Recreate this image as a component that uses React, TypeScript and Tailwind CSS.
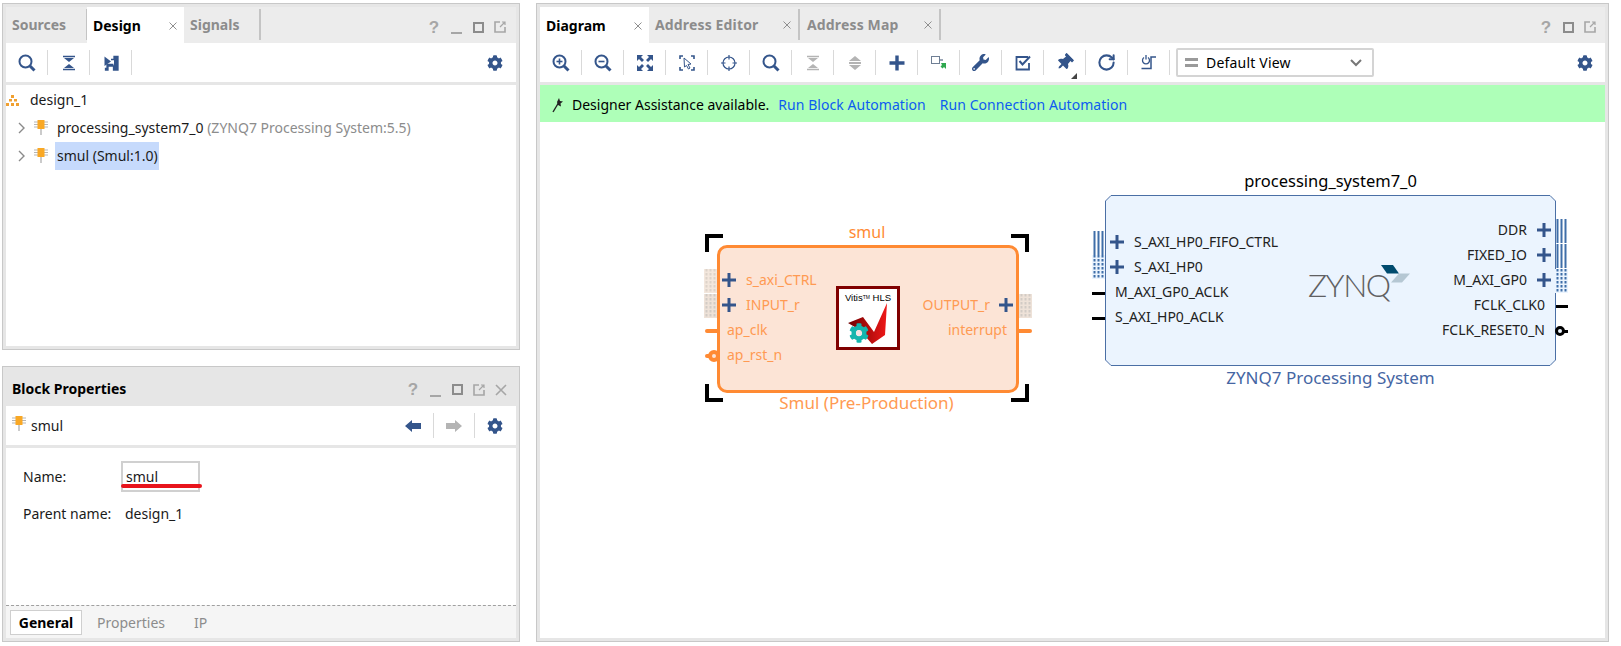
import { FaCog, FaWrench, FaThumbtack } from "react-icons/fa"
import { RotateCw } from "lucide-react"

const BLUE = "#34558b"
const GRAY = "#b4b4b4"

function Sep() {
    return <div className="w-px h-[25px] bg-[#d9d9d9] shrink-0" />
}

function Slot({ children }: { children: React.ReactNode }) {
    return <div className="w-[41px] shrink-0 flex items-center justify-center relative">{children}</div>
}

function Ic({ children }: { children: React.ReactNode }) {
    return <svg width="20" height="20" viewBox="0 0 20 20" fill="none">{children}</svg>
}

function Search({ inner }: { inner?: "plus" | "minus" }) {
    return (
        <Ic>
            <circle cx="8.5" cy="8.5" r="6" stroke={BLUE} strokeWidth="2" />
            <path d="M13 13l4.5 4.5" stroke={BLUE} strokeWidth="3" />
            {inner && <path d="M5.5 8.5h6" stroke={BLUE} strokeWidth="1.6" />}
            {inner === "plus" && <path d="M8.5 5.5v6" stroke={BLUE} strokeWidth="1.6" />}
        </Ic>
    )
}

function Collapse({ color }: { color: string }) {
    return (
        <Ic>
            <path d="M4 3.500h12M4 16.500h12" stroke={color} strokeWidth="1.6" />
            <path d="M5 5h10l-5 4zM5 15h10l-5-4z" fill={color} />
        </Ic>
    )
}

function Expand() {
    return (
        <Ic>
            <path d="M10 3l6 5H4zM10 17l6-5H4z" fill={GRAY} />
            <path d="M4 10h12" stroke={GRAY} strokeWidth="2" />
        </Ic>
    )
}

function Fit() {
    const c = "M2 2h6L6 4l3 3-2 2-3-3-2 2z"
    return (
        <Ic>
            <path d={c} fill={BLUE} />
            <path d={c} fill={BLUE} transform="matrix(-1 0 0 1 20 0)" />
            <path d={c} fill={BLUE} transform="matrix(1 0 0 -1 0 20)" />
            <path d={c} fill={BLUE} transform="matrix(-1 0 0 -1 20 20)" />
        </Ic>
    )
}

function SelectArea() {
    return (
        <Ic>
            <path d="M6 3H3v3M14 3h3v3M3 14v3h3M17 14v3h-3" stroke={BLUE} strokeWidth="1.6" />
            <path d="M7 5l7 6-3 .5 2 3.5-1.5 1-2-3.5L7.5 14z" fill="#fff" stroke={BLUE} strokeWidth="1" />
        </Ic>
    )
}

function Crosshair() {
    return (
        <Ic>
            <circle cx="10" cy="10" r="6" stroke={BLUE} strokeWidth="1.2" />
            <path d="M10 2v4.500M10 13.500v4.500M2 10h4.500M13.500 10h4.500" stroke={BLUE} strokeWidth="1.2" />
        </Ic>
    )
}

function Plus() {
    return (
        <Ic>
            <path d="M10 2.500v15M2.500 10h15" stroke={BLUE} strokeWidth="3.400" />
        </Ic>
    )
}

function Connect() {
    return (
        <Ic>
            <rect x="2.500" y="3.500" width="8" height="7" fill="#fff" stroke="#6f7f95" strokeWidth="1" />
            <path d="M11 7h3" stroke="#6f7f95" strokeWidth="1.400" />
            <path d="M12 10l5 0 0 6-2-2-1.500 1.500-2-2L13 12z" fill="#2fa84f" />
        </Ic>
    )
}

function Check() {
    return (
        <Ic>
            <path d="M15 4H3.500v12.500H16V10" stroke={BLUE} strokeWidth="1.800" />
            <path d="M6.500 8l3 3.500L17 3.500" stroke={BLUE} strokeWidth="2" />
        </Ic>
    )
}

function Regen() {
    return (
        <Ic>
            <path d="M9 4.500a3.500 3.500 0 1 1-4 0" stroke={BLUE} strokeWidth="1.300" />
            <path d="M7 2v4.500" stroke={BLUE} strokeWidth="1.300" />
            <path d="M2.500 15.500h9.500V4H17" stroke={BLUE} strokeWidth="1.500" />
        </Ic>
    )
}

function Route() {
    return (
        <Ic>
            <path d="M3.500 3.500L10 8.500 3.500 13z" fill={BLUE} />
            <path d="M10 6.500h3V3.500h4V17h-4.500v-4H7v4H4.500v-1.500H6v-4h6.500" fill="none" stroke={BLUE} strokeWidth="1.300" />
            <rect x="13" y="4" width="4" height="13" fill={BLUE} />
        </Ic>
    )
}

function Gear({ className }: { className?: string }) {
    return <FaCog size={16} color={BLUE} className={className} />
}

function Chip() {
    return (
        <svg width="16" height="18" viewBox="0 0 16 18" fill="none">
            <path d="M1 3h14M1 5.500h14M1 8h14" stroke="#b5b5b5" strokeWidth="1" />
            <rect x="4.500" y="1" width="7" height="9" fill="#f9a825" />
            <path d="M8 10v6" stroke="#b5b5b5" strokeWidth="1.400" />
        </svg>
    )
}

function Tree() {
    return (
        <svg width="14" height="13" viewBox="0 0 14 13" fill="#f0a030">
            <rect x="5" y="1" width="3" height="3" />
            <rect x="3" y="5" width="3" height="2.500" />
            <rect x="8" y="5" width="3" height="2.500" />
            <rect x="0" y="9" width="3" height="3" />
            <rect x="5" y="9" width="3" height="3" />
            <rect x="10" y="9" width="3" height="3" />
        </svg>
    )
}

function Chevron() {
    return (
        <svg width="8" height="12" viewBox="0 0 8 12" fill="none">
            <path d="M1 1l5 5-5 5" stroke="#8a8a8a" strokeWidth="1.400" />
        </svg>
    )
}

function WinIcons({ min, close }: { min?: boolean; close?: boolean }) {
    return (
        <div className="flex items-center">
            <span className="w-[22px] text-center text-[17px] leading-none font-bold text-[#a6a6a6] font-['Liberation_Sans',sans-serif]">?</span>
            {min && (
                <span className="w-[22px] h-[14px] flex items-end justify-center">
                    <span className="w-[11px] h-[2px] bg-[#a6a6a6]" />
                </span>
            )}
            <span className="w-[22px] flex justify-center">
                <span className="size-[11px] border-2 border-[#8c8c8c]" />
            </span>
            <span className="w-[22px] flex justify-center">
                <svg width="12" height="12" viewBox="0 0 12 12" fill="none">
                    <path d="M6 1H1v10h10V6" stroke="#a6a6a6" strokeWidth="1.600" />
                    <path d="M6 6l5-5M8 1h3v3" stroke="#a6a6a6" strokeWidth="1.200" />
                </svg>
            </span>
            {close && (
                <span className="w-[22px] flex justify-center">
                    <svg width="12" height="12" viewBox="0 0 12 12" fill="none">
                        <path d="M1 1l10 10M11 1L1 11" stroke="#a6a6a6" strokeWidth="1.600" />
                    </svg>
                </span>
            )}
        </div>
    )
}

function X() {
    return (
        <svg width="8" height="8" viewBox="0 0 8 8" fill="none">
            <path d="M0.500 0.500l7 7M7.500 0.500l-7 7" stroke="#8f8f8f" strokeWidth="1" />
        </svg>
    )
}

function PortPlus() {
    return (
        <svg width="14" height="14" viewBox="0 0 14 14" className="shrink-0">
            <path d="M7 0v14M0 7h14" stroke={BLUE} strokeWidth="3" />
        </svg>
    )
}

function Bus({ color, dotted, bg, w }: { color: string; dotted?: boolean; bg?: string; w?: number }) {
    return (
        <svg width="13" height="24" viewBox="0 0 13 24" className="block">
            <rect width="13" height="24" fill={bg ?? "none"} />
            {[2.5, 6.5, 10.5].map((x) => (
                <path key={x} d={`M${x} 0v24`} stroke={color} strokeWidth={w ?? 2} strokeDasharray={dotted ? "2.500 1.500" : undefined} />
            ))}
        </svg>
    )
}

function Corner({ className }: { className: string }) {
    return <div className={`absolute size-[18px] border-black ${className}`} />
}

function Row({ children, className }: { children: React.ReactNode; className?: string }) {
    return <div className={`h-[25px] flex items-center ${className ?? ""}`}>{children}</div>
}

function VitisLogo() {
    return (
        <div className="relative size-[64px] mt-[38px] border-[3px] border-[#800000] bg-white shrink-0 font-['Liberation_Sans',sans-serif] text-black">
            <div className="text-[9.5px] leading-none text-center pt-[4px] whitespace-nowrap">
                Vitis<sup className="text-[5px]">TM</sup> HLS
            </div>
            <svg width="58" height="58" viewBox="3 3 58 58" className="absolute left-0 top-0">
                <defs>
                    <linearGradient id="vit" x1="0" y1="0" x2="1" y2="0">
                        <stop offset="0" stopColor="#6f0000" />
                        <stop offset="1" stopColor="#f01818" />
                    </linearGradient>
                </defs>
                <path d="M12 37L27 31L38 46L51 17L49 49L36 58L24 44Z" fill="url(#vit)" />
            </svg>
            <FaCog size={20} color="#14b5ad" className="absolute left-[10px] top-[34px]" />
            <span className="absolute left-[17px] top-[41px] size-[6px] rounded-full bg-[#f3e3e3]" />
        </div>
    )
}

function SmulBlock() {
    const label = "text-[14px] text-[#ff9a52] whitespace-nowrap"
    return (
        <div className="absolute left-[176px] top-[96px] w-[304px] flex flex-col">
            <div className="h-[27px] flex items-center justify-center pr-[2px] text-[16px] text-[#ff8a33]">smul</div>
            <div className="relative mx-[1px] h-[148px] border-[3px] border-[#ff8a33] rounded-[10px] bg-[#fce4d6] flex">
                <div className="w-[116px] shrink-0 pt-[19px]">
                    <Row className="pl-[2px] gap-[10px]"><PortPlus /><span className={label}>s_axi_CTRL</span></Row>
                    <Row className="pl-[2px] gap-[10px]"><PortPlus /><span className={label}>INPUT_r</span></Row>
                    <Row className="pl-[7px]"><span className={label}>ap_clk</span></Row>
                    <Row className="pl-[7px] pt-[1px]"><span className={label}>ap_rst_n</span></Row>
                </div>
                <VitisLogo />
                <div className="flex-1 pt-[44px] flex flex-col items-end">
                    <Row className="pr-[3px] gap-[9px]"><span className={label}>OUTPUT_r</span><PortPlus /></Row>
                    <Row className="pr-[9px] pt-[1px]"><span className={label}>interrupt</span></Row>
                </div>

                <div className="absolute -left-[16px] top-[21px]"><Bus color="#ddd3ca" dotted bg="#f3e7dd" /></div>
                <div className="absolute -left-[16px] top-[46px]"><Bus color="#d2cbc5" dotted bg="#eee2d8" /></div>
                <div className="absolute -right-[16px] top-[46px]"><Bus color="#d2cbc5" dotted bg="#eee2d8" /></div>
                <div className="absolute -left-[15px] top-[81px] w-[12px] h-[4px] bg-[#ff8a33] rounded-l-full" />
                <div className="absolute -right-[16px] top-[81px] w-[13px] h-[4px] bg-[#ff8a33] rounded-r-full" />
                <div className="absolute -left-[15px] top-[106px] w-[12px] h-[4px] bg-[#ff8a33] rounded-l-full" />
                <div className="absolute -left-[12px] top-[102px] size-[12px] rounded-full border-[4px] border-[#ff8a33] bg-[#fce4d6]" />

                <Corner className="-left-[15px] -top-[14px] border-l-4 border-t-4" />
                <Corner className="-right-[13px] -top-[14px] border-r-4 border-t-4" />
                <Corner className="-left-[15px] -bottom-[12px] border-l-4 border-b-4" />
                <Corner className="-right-[13px] -bottom-[12px] border-r-4 border-b-4" />
            </div>
            <div className="h-[18px] flex items-center justify-center pr-[3px] text-[17px] text-[#ff9a52] whitespace-nowrap">Smul (Pre-Production)</div>
        </div>
    )
}

function PsBlock() {
    const label = "text-[14px] text-[#222222] whitespace-nowrap"
    const busBlue = "#3f6ea8"
    return (
        <div className="absolute left-[565px] top-[47px] w-[451px] flex flex-col">
            <div className="h-[26px] flex items-center justify-center text-[16.500px] text-black pb-[1px]">processing_system7_0</div>
            <div className="relative h-[171px] flex">
                <svg width="451" height="171" viewBox="0 0 451 171" className="absolute left-0 top-0">
                    <path d="M6 .5H445L450.500 6V165L445 170.500H6L.5 165V6Z" fill="#ebf4fe" stroke="#4a6fa5" strokeWidth="1" />
                </svg>
                <div className="relative w-[203px] shrink-0 pt-[34px]">
                    <Row className="pl-[5px] gap-[10px]"><PortPlus /><span className={label}>S_AXI_HP0_FIFO_CTRL</span></Row>
                    <Row className="pl-[5px] gap-[10px]"><PortPlus /><span className={label}>S_AXI_HP0</span></Row>
                    <Row className="pl-[10px]"><span className={label}>M_AXI_GP0_ACLK</span></Row>
                    <Row className="pl-[10px]"><span className={label}>S_AXI_HP0_ACLK</span></Row>
                </div>
                <div className="relative w-[102px] shrink-0 pt-[72px]">
                    <div className="text-[32px] leading-[36px] font-light text-[#5f6062] font-['Lato',sans-serif] tracking-[-1.500px]">ZYNQ</div>
                    <svg width="40" height="20" viewBox="0 0 40 20" className="absolute left-[72px] top-[69px]">
                        <path d="M1 1H13L19 9.500H7Z" fill="#004b6e" />
                        <path d="M19 9.500H30L22 18.500H11Z" fill="#b5c7d3" />
                    </svg>
                </div>
                <div className="relative flex-1 pt-[22px] flex flex-col items-end">
                    <Row className="pr-[5px] gap-[10px]"><span className={label}>DDR</span><PortPlus /></Row>
                    <Row className="pr-[5px] gap-[10px]"><span className={label}>FIXED_IO</span><PortPlus /></Row>
                    <Row className="pr-[5px] gap-[10px]"><span className={label}>M_AXI_GP0</span><PortPlus /></Row>
                    <Row className="pr-[11px]"><span className={label}>FCLK_CLK0</span></Row>
                    <Row className="pr-[11px]"><span className={label}>FCLK_RESET0_N</span></Row>
                </div>

                <div className="absolute -left-[13px] top-[36px]"><Bus color={busBlue} /></div>
                <div className="absolute -left-[13px] top-[60px]"><Bus color={busBlue} dotted bg="#ebf4fe" /></div>
                <div className="absolute -right-[12px] top-[24px]"><Bus color={busBlue} /></div>
                <div className="absolute -right-[12px] top-[49px]"><Bus color={busBlue} /></div>
                <div className="absolute -right-[12px] top-[74px]"><Bus color={busBlue} dotted bg="#ebf4fe" /></div>
                <div className="absolute -left-[13px] top-[97px] w-[13px] h-[3px] bg-black" />
                <div className="absolute -left-[13px] top-[122px] w-[13px] h-[3px] bg-black" />
                <div className="absolute -right-[12px] top-[110px] w-[12px] h-[3px] bg-black" />
                <div className="absolute -right-[12px] top-[135px] w-[12px] h-[3px] bg-black" />
                <div className="absolute -right-[9px] top-[131px] size-[10px] rounded-full border-[3px] border-black bg-[#ebf4fe]" />
            </div>
            <div className="h-[22px] flex items-center justify-center text-[17px] text-[#4566a3] whitespace-nowrap">ZYNQ7 Processing System</div>
        </div>
    )
}

export default function App() {
    return (
        <div className="w-[1621px] h-[646px] bg-white flex pl-[2px] pt-[3px] gap-[16px] font-['Noto_Sans',sans-serif] text-[14px] leading-none text-[#1a1a1a] overflow-hidden">
            <div className="w-[518px] flex flex-col gap-[16px] shrink-0">
                {/* sources panel */}
                <div className="h-[347px] border border-[#c8c8c8] bg-[#e6e6e6] p-[3px] flex flex-col">
                    <div className="h-[36px] bg-[#ececec] flex items-stretch">
                        <div className="w-[81px] flex items-center pl-[6px] pt-[1px] font-bold text-[#8c8c8c] border-r border-[#c4c4c4] h-[31px] self-start mt-[2px]">Sources</div>
                        <div className="w-[97px] bg-white flex items-center justify-between pl-[6px] pr-[7px] pt-[1px] font-bold text-black">Design<X /></div>
                        <div className="w-[77px] flex items-center pl-[6px] pt-[1px] font-bold text-[#8c8c8c] border-r-2 border-[#c4c4c4] h-[31px] self-start mt-[2px]">Signals</div>
                        <div className="ml-auto pr-[5px] pt-[4px] flex items-center"><WinIcons min /></div>
                    </div>
                    <div className="h-[39px] bg-white flex items-center">
                        <Slot><Search /></Slot><Sep />
                        <Slot><Collapse color={BLUE} /></Slot><Sep />
                        <Slot><Route /></Slot><Sep />
                        <div className="ml-auto pr-[13px]"><Gear /></div>
                    </div>
                    <div className="flex-1 mt-[3px] bg-white pt-[1px]">
                        <div className="h-[28px] flex items-center gap-[10px]"><Tree /><span>design_1</span></div>
                        <div className="h-[28px] flex items-center pl-[12px]">
                            <Chevron />
                            <span className="ml-[7px]"><Chip /></span>
                            <span className="ml-[6px] px-[2px]">processing_system7_0 <span className="text-[#8c8c8c]">(ZYNQ7 Processing System:5.5)</span></span>
                        </div>
                        <div className="h-[28px] flex items-center pl-[12px]">
                            <Chevron />
                            <span className="ml-[7px]"><Chip /></span>
                            <span className="ml-[6px] pl-[2px] pr-[1px] h-[28px] flex items-center bg-[#c6dafc]">smul (Smul:1.0)</span>
                        </div>
                    </div>
                </div>

                {/* block properties panel */}
                <div className="h-[276px] border border-[#c8c8c8] bg-[#e6e6e6] px-[3px] pb-[3px] flex flex-col">
                    <div className="h-[39px] flex items-center justify-between pl-[6px] pr-[4px] pt-[4px] font-bold text-black">
                        Block Properties
                        <span className="pt-[2px]"><WinIcons min close /></span>
                    </div>
                    <div className="h-[39px] bg-white flex items-center">
                        <span className="ml-[5px] mb-[3px]"><Chip /></span>
                        <span className="ml-[4px]">smul</span>
                        <div className="ml-auto flex items-center">
                            <div className="w-[40px] flex justify-center">
                                <svg width="16" height="12" viewBox="0 0 16 12"><path d="M0 6l7-6v3h9v6H7v3z" fill={BLUE} /></svg>
                            </div>
                            <Sep />
                            <div className="w-[40px] flex justify-center">
                                <svg width="16" height="12" viewBox="0 0 16 12"><path d="M16 6L9 0v3H0v6h9v3z" fill={GRAY} /></svg>
                            </div>
                            <Sep />
                            <div className="w-[41px] flex justify-center pr-[1px]"><Gear /></div>
                        </div>
                    </div>
                    <div className="flex-1 mt-[3px] bg-white pl-[17px] pt-[13px] flex flex-col">
                        <div className="flex items-center">
                            <span className="w-[98px]">Name:</span>
                            <div className="relative w-[79px] h-[31px] border-2 border-[#d0d0d0] flex items-center pl-[3px]">
                                smul
                                <span className="absolute -left-[2px] -right-[4px] bottom-[2px] h-[4px] rounded-full bg-[#e8141c]" />
                            </div>
                        </div>
                        <div className="flex items-center mt-[12px] h-[20px]">
                            <span className="w-[102px]">Parent name:</span>
                            <span>design_1</span>
                        </div>
                    </div>
                    <div className="h-[33px] bg-[#f5f5f5] border-t border-dashed border-[#a0a0a0] flex items-center pl-[4px] pt-[1px]">
                        <div className="w-[72px] h-[25px] bg-white border border-[#cfcfcf] flex items-center justify-center font-bold text-black">General</div>
                        <span className="ml-[15px] text-[#8c8c8c]">Properties</span>
                        <span className="ml-[29px] text-[#8c8c8c]">IP</span>
                    </div>
                </div>
            </div>

            {/* diagram panel */}
            <div className="w-[1073px] h-[639px] border border-[#c8c8c8] bg-[#e6e6e6] p-[3px] flex flex-col shrink-0">
                <div className="h-[36px] bg-[#ececec] flex items-stretch">
                    <div className="w-[109px] bg-white flex items-center justify-between pl-[6px] pr-[7px] pt-[1px] font-bold text-black">Diagram<X /></div>
                    <div className="w-[151px] flex items-center justify-between pl-[6px] pr-[7px] pt-[1px] font-bold text-[#8c8c8c] tracking-[0.15px] border-r-2 border-[#c4c4c4] h-[31px] self-start mt-[2px]">Address Editor<X /></div>
                    <div className="w-[141px] flex items-center justify-between pl-[7px] pr-[7px] pt-[1px] font-bold text-[#8c8c8c] tracking-[0.15px] border-r-2 border-[#c4c4c4] h-[31px] self-start mt-[2px]">Address Map<X /></div>
                    <div className="ml-auto pr-[4px] pt-[4px] flex items-center"><WinIcons /></div>
                </div>
                <div className="h-[39px] bg-white flex items-center">
                    <Slot><Search inner="plus" /></Slot><Sep />
                    <Slot><Search inner="minus" /></Slot><Sep />
                    <Slot><Fit /></Slot><Sep />
                    <Slot><SelectArea /></Slot><Sep />
                    <Slot><Crosshair /></Slot><Sep />
                    <Slot><Search /></Slot><Sep />
                    <Slot><Collapse color={GRAY} /></Slot><Sep />
                    <Slot><Expand /></Slot><Sep />
                    <Slot><Plus /></Slot><Sep />
                    <Slot><Connect /></Slot><Sep />
                    <Slot><FaWrench size={17} color={BLUE} /></Slot><Sep />
                    <Slot><Check /></Slot><Sep />
                    <Slot>
                        <FaThumbtack size={17} color={BLUE} className="rotate-45" />
                        <span className="absolute right-[8px] bottom-[-8px] size-0 border-l-[6px] border-l-transparent border-b-[6px] border-b-[#444]" />
                    </Slot><Sep />
                    <Slot><RotateCw size={19} color={BLUE} strokeWidth={2.6} /></Slot><Sep />
                    <Slot><Regen /></Slot><Sep />
                    <div className="ml-[6px] w-[198px] h-[29px] border-2 border-[#d4d4d4] rounded-[2px] flex items-center pl-[7px] pr-[10px]">
                        <span className="w-[13px] h-[9px] border-y-[3px] border-[#9a9a9a]" />
                        <span className="ml-[8px] text-black tracking-[0.2px]">Default View</span>
                        <svg width="12" height="8" viewBox="0 0 12 8" className="ml-auto" fill="none">
                            <path d="M1 1l5 5 5-5" stroke="#777" strokeWidth="2" />
                        </svg>
                    </div>
                    <div className="ml-auto pr-[12px]"><Gear /></div>
                </div>
                <div className="h-[37px] mt-[3px] bg-[#aeffb8] flex items-center pl-[11px] pt-[2px]">
                    <svg width="14" height="16" viewBox="0 0 14 16" fill="none">
                        <path d="M2 15L8 5" stroke="#222" strokeWidth="1.400" />
                        <path d="M8 1l1 3 3 .5-2.500 2 .5 3-3-1.500-1-3z" fill="#222" />
                    </svg>
                    <span className="ml-[7px] text-black">Designer Assistance available.</span>
                    <span className="ml-[9px] text-[#0d5cf0] tracking-[0.05px]">Run Block Automation</span>
                    <span className="ml-[14px] text-[#0d5cf0] tracking-[0.05px]">Run Connection Automation</span>
                </div>
                <div className="relative flex-1 bg-white">
                    <SmulBlock />
                    <PsBlock />
                </div>
            </div>
        </div>
    )
}
